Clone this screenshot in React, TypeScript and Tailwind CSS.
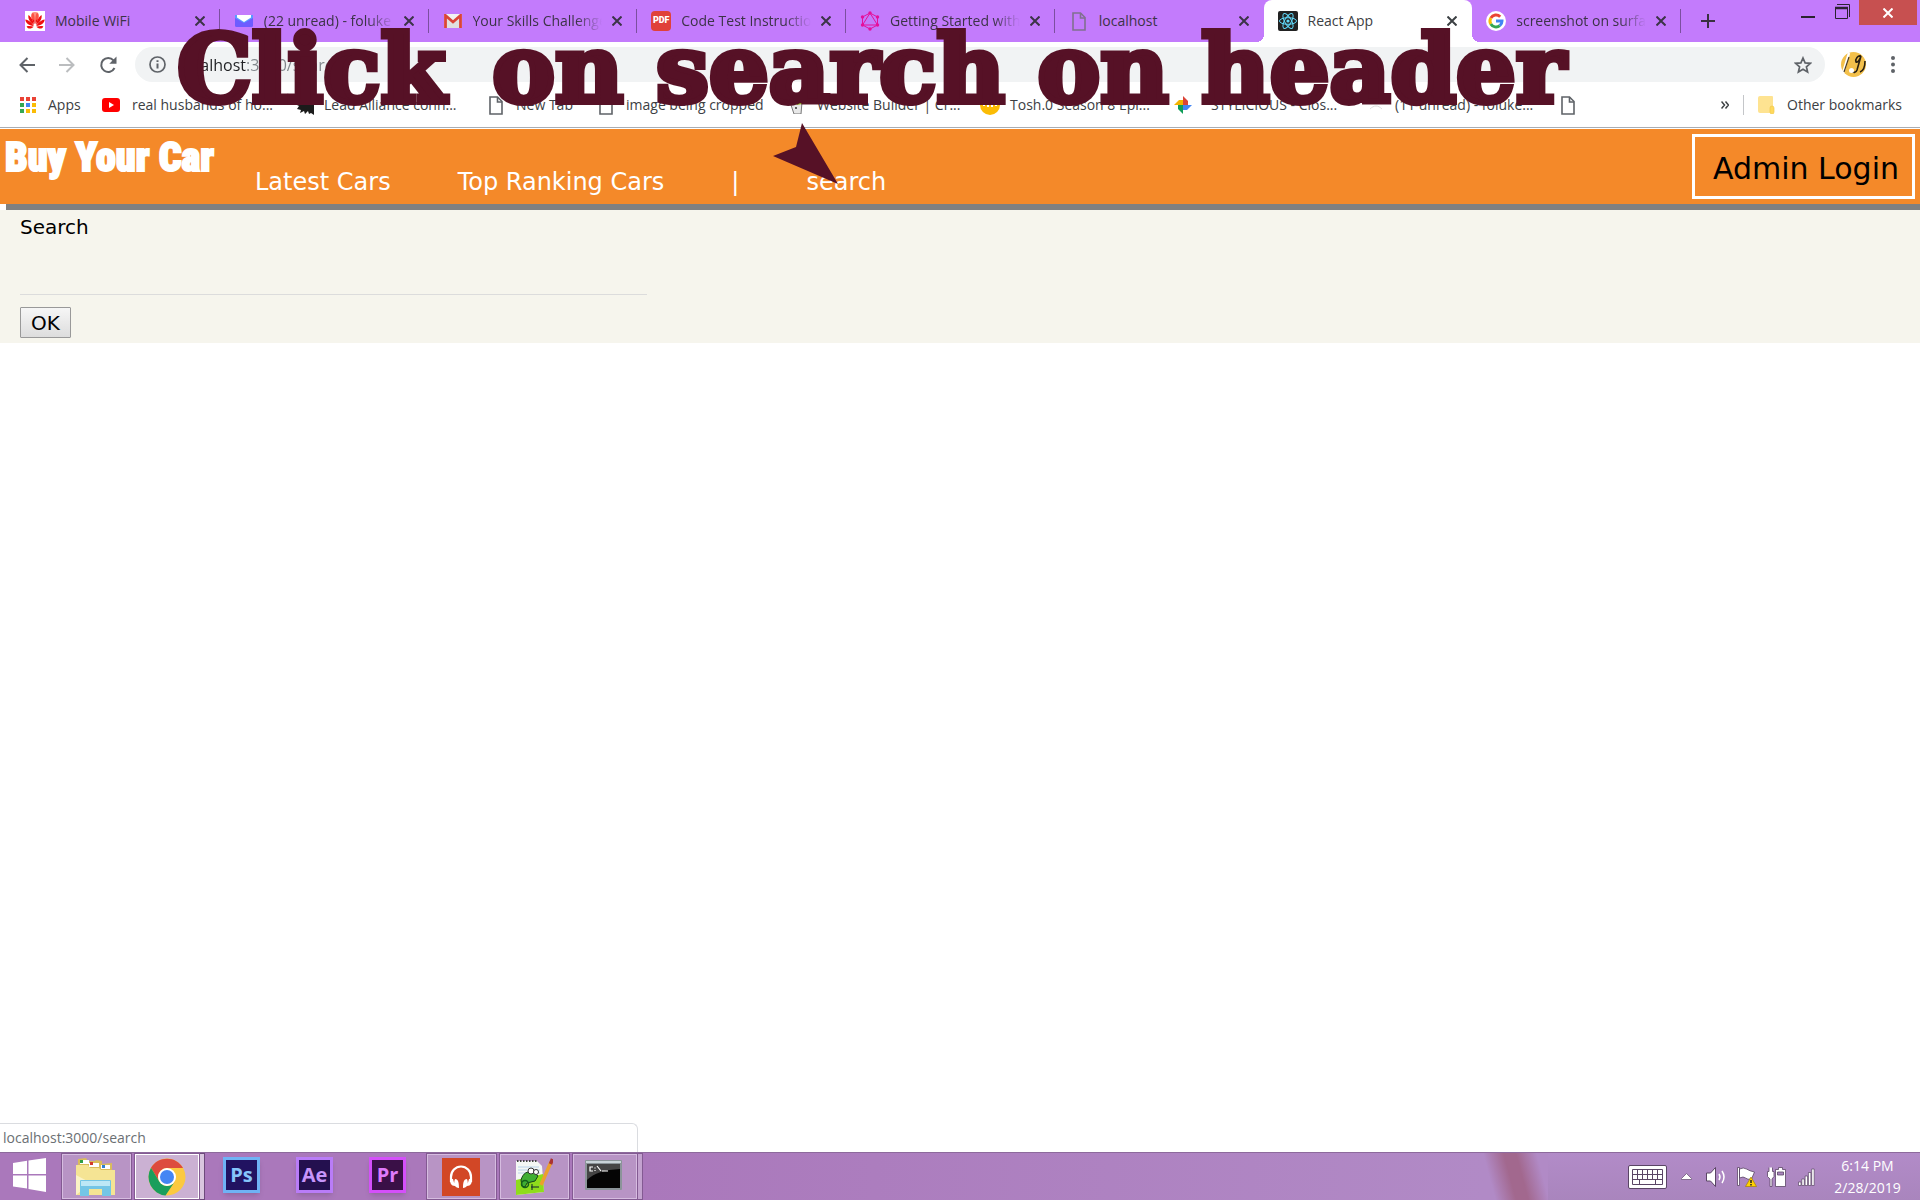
import React from "react";

const ui = "font-['Open_Sans','Noto_Sans',sans-serif]";

function PageIcon({ color = "#5f6368" }: { color?: string }) {
  return (
    <svg width="14" height="19" viewBox="0 0 14 19" fill="none" stroke={color} strokeWidth="1.6">
      <path d="M1 1h7.5L13 5.500V18H1z" />
      <path d="M8.500 1v5H13" />
    </svg>
  );
}

function Huawei() {
  return (
    <svg width="20" height="20" viewBox="0 0 20 20">
      <rect width="20" height="20" fill="#fff" />
      <g fill="#f01010">
        <path d="M9.500 13C6.500 9 5.500 4 8 1.500c1.500 2 2 7 1.500 11.500zM10.500 13C10 8.500 10.500 3.500 12 1.500 14.500 4 13.500 9 10.500 13z" />
        <path d="M9 14C5 11 2.500 7.500 3.500 4 6 5.500 8.500 10 9 14zM11 14c.5-4 3-8.500 5.500-10 1 3.500-1.500 7-5.500 10z" />
        <path d="M8.800 15C4 14.500.5 12 .3 8.500c3.500.5 7 3.500 8.500 6.500zM11.200 15c1.500-3 5-6 8.500-6.500-.2 3.500-3.700 6-8.500 6.500z" />
        <path d="M8.700 15.800C6 18.500 3 18 1.600 15.400c2-.6 5-.3 7.100.4zM11.300 15.800c2.100-.7 5.100-1 7.100-.4-1.400 2.600-4.400 3.100-7.100.4z" />
      </g>
      <circle cx="10" cy="5" r="4" fill="#ff6a55" opacity=".75" />
    </svg>
  );
}

function MailIcon() {
  return (
    <svg width="18" height="12" viewBox="0 0 18 12">
      <rect width="18" height="12" rx="1.500" fill="#6d5cff" />
      <path d="M0 0h18v3L9 8 0 3z" fill="#5a9bff" />
      <path d="M2 0h14v2.500L9 7 2 2.500z" fill="#fff" />
    </svg>
  );
}

function GmailIcon() {
  return (
    <svg width="18" height="14" viewBox="0 0 18 14">
      <rect width="18" height="14" rx="1" fill="#f1f1f1" />
      <path d="M3 14V4l6 5 6-5v10" fill="#e0e0e0" />
      <path d="M1.500 14V1.500L9 8l7.500-6.500V14" fill="none" stroke="#db4437" strokeWidth="2.800" />
    </svg>
  );
}

function GraphqlIcon() {
  return (
    <svg width="20" height="20" viewBox="0 0 20 20" fill="none" stroke="#e5109b" strokeWidth="1">
      <path d="M10 2l7.500 4v8L10 18l-7.500-4V6zM10 2L2.500 14h15z" />
      <g fill="#e5109b" stroke="none">
        <circle cx="10" cy="2" r="1.700" /><circle cx="17.500" cy="6" r="1.700" /><circle cx="17.500" cy="14" r="1.700" />
        <circle cx="10" cy="18" r="1.700" /><circle cx="2.500" cy="14" r="1.700" /><circle cx="2.500" cy="6" r="1.700" />
      </g>
    </svg>
  );
}

function ReactIcon() {
  return (
    <svg width="20" height="20" viewBox="0 0 20 20" fill="none" stroke="#61dafb" strokeWidth="1">
      <rect width="20" height="20" rx="2" fill="#222" stroke="none" />
      <ellipse cx="10" cy="10" rx="8.500" ry="3.300" />
      <ellipse cx="10" cy="10" rx="8.500" ry="3.300" transform="rotate(60 10 10)" />
      <ellipse cx="10" cy="10" rx="8.500" ry="3.300" transform="rotate(120 10 10)" />
      <circle cx="10" cy="10" r="1.600" fill="#61dafb" stroke="none" />
    </svg>
  );
}

function GoogleIcon() {
  return (
    <svg width="20" height="20" viewBox="0 0 20 20">
      <circle cx="10" cy="10" r="10" fill="#fff" />
      <g fill="none" strokeWidth="3">
        <path d="M14.200 5.800A6 6 0 0 0 4.800 7" stroke="#ea4335" />
        <path d="M4.800 7a6 6 0 0 0 0 6" stroke="#fbbc05" />
        <path d="M4.800 13a6 6 0 0 0 9 1.600" stroke="#34a853" />
        <path d="M13.800 14.600A6 6 0 0 0 16 10h-6" stroke="#4285f4" />
      </g>
    </svg>
  );
}

function PdfIcon() {
  return (
    <span className="flex h-5 w-5 items-center justify-center rounded-sm bg-[#e0413a] font-['Roboto',sans-serif] text-[9px] font-black text-white">
      PDF
    </span>
  );
}

function Cross({ className = "" }: { className?: string }) {
  return (
    <svg className={className} width="10" height="10" viewBox="0 0 10 10" stroke="currentColor" strokeWidth="2">
      <path d="M.5.5l9 9M9.500.5l-9 9" />
    </svg>
  );
}

const tabs = [
  { title: "Mobile WiFi", icon: <Huawei /> },
  { title: "(22 unread) - foluke", icon: <MailIcon /> },
  { title: "Your Skills Challenge", icon: <GmailIcon /> },
  { title: "Code Test Instructions", icon: <PdfIcon /> },
  { title: "Getting Started with", icon: <GraphqlIcon /> },
  { title: "localhost", icon: <PageIcon color="#80708f" /> },
  { title: "React App", icon: <ReactIcon />, active: true },
  { title: "screenshot on surface", icon: <GoogleIcon /> },
];

function TabStrip() {
  return (
    <div className="flex h-[42px] bg-[#c37bfc] pl-[11px] text-[#3c3347]">
      <div className="grid w-[1670px] min-w-0 grid-cols-8">
        {tabs.map((t, i) => (
          <div
            key={t.title}
            className={
              t.active
                ? "relative flex min-w-0 items-center rounded-t-lg bg-white pr-[15px] pl-[14px] text-[#3c4043]"
                : "flex min-w-0 items-center pl-[14px]"
            }
          >
            {t.active && (
              <>
                <span className="absolute bottom-0 -left-2 h-2 w-2 bg-[radial-gradient(circle_at_0_0,transparent_8px,white_8px)]" />
                <span className="absolute -right-2 bottom-0 h-2 w-2 bg-[radial-gradient(circle_at_100%_0,transparent_8px,white_8px)]" />
              </>
            )}
            <span className="flex w-5 shrink-0 justify-center">{t.icon}</span>
            <button
              className={
                t.title.length > 15
                  ? "ml-[10px] min-w-0 flex-1 overflow-hidden mask-r-from-80% text-left text-sm whitespace-nowrap"
                  : "ml-[10px] min-w-0 flex-1 overflow-hidden text-left text-sm whitespace-nowrap"
              }
            >
              {t.title}
            </button>
            <button aria-label={"Close " + t.title} className="ml-[10px] shrink-0">
              <Cross />
            </button>
            {!t.active && (
              <span className={i === 5 ? "ml-[14px] w-px" : "ml-[14px] h-6 w-px bg-[#7b4f9e]"} />
            )}
          </div>
        ))}
      </div>
      <button aria-label="New tab" className="ml-5 text-[#3a3040]">
        <svg width="14" height="14" viewBox="0 0 14 14" stroke="currentColor" strokeWidth="2"><path d="M7 0v14M0 7h14" /></svg>
      </button>
      <div className="ml-auto flex items-start text-[#2b2230]">
        <button aria-label="Minimize" className="mt-4 mr-5">
          <svg width="14" height="2" viewBox="0 0 14 2"><path d="M0 0h14v2H0z" fill="currentColor" /></svg>
        </button>
        <button aria-label="Restore" className="mt-1 mr-[9px]">
          <svg width="15" height="15" viewBox="0 0 15 15" fill="none" stroke="currentColor">
            <path d="M2 .5h12.500V13" /><path d="M.5 4v10.500h12V4" /><path d="M0 4h13" strokeWidth="2.500" />
          </svg>
        </button>
        <button aria-label="Close window" className="mr-[3px] flex h-[25px] w-[58px] items-center justify-center bg-[#c75050] text-white">
          <Cross />
        </button>
      </div>
    </div>
  );
}

function Toolbar() {
  return (
    <div className="flex h-[45px] items-center pl-[19px] text-[#5f6368]">
      <button aria-label="Back" className="mr-6">
        <svg width="16" height="16" viewBox="0 0 16 16" fill="none" stroke="currentColor" strokeWidth="2"><path d="M16 8H1.500M8.500 1L1.500 8l7 7" /></svg>
      </button>
      <button aria-label="Forward" className="mr-6 text-[#bbbdbf]">
        <svg width="16" height="16" viewBox="0 0 16 16" fill="none" stroke="currentColor" strokeWidth="2"><path d="M0 8h14.500M7.500 1l7 7-7 7" /></svg>
      </button>
      <button aria-label="Reload" className="mr-[18px]">
        <svg width="18" height="18" viewBox="0 0 18 18" fill="none" stroke="currentColor" strokeWidth="2"><path d="M15.500 12A7 7 0 1 1 14.500 4.300" /><path d="M17.500.5v7.200h-7.200z" fill="currentColor" stroke="none" /></svg>
      </button>
      <div className="flex h-[35px] flex-1 items-center rounded-full bg-[#f1f3f4] pr-[13px] pl-[14px]">
        <svg width="17" height="17" viewBox="0 0 17 17" fill="none" stroke="currentColor" strokeWidth="1.700"><circle cx="8.500" cy="8.500" r="7.500" /><path d="M8.500 7.500v5M8.500 4.300v1.800" strokeWidth="2" /></svg>
        <input
          aria-label="Address"
          defaultValue="localhost:3000/search"
          className="ml-[13px] h-6 min-w-0 flex-1 bg-[linear-gradient(90deg,#202124_68px,#80868b_68px)] bg-clip-text text-base text-transparent outline-none"
        />
        <button aria-label="Bookmark this page">
          <svg width="18" height="18" viewBox="0 0 18 18" fill="none" stroke="currentColor" strokeWidth="1.700"><path d="M9 2l2.100 4.900 5.300.4-4 3.500 1.200 5.200L9 13.200 4.400 16l1.200-5.200-4-3.500 5.300-.4z" /></svg>
        </button>
      </div>
      <button aria-label="Profile" className="ml-4">
        <svg width="25" height="25" viewBox="0 0 25 25" fill="none">
          <circle cx="12.500" cy="12.500" r="12.500" fill="#f3c04b" />
          <path d="M8 1L2 21" stroke="#fff" strokeWidth="2.500" /><path d="M8 5L3 20" stroke="#4a3a20" strokeWidth="1.200" />
          <path d="M20 4c-3-1-6 3-5 6 2 1 4-3 5-6l-4 14c-1 3-4 3-5 1M24 9c0 6-2 10-5 11" stroke="#2a2010" strokeWidth="1.600" />
          <circle cx="10.500" cy="18.500" r="2.500" fill="#fff" />
        </svg>
      </button>
      <button aria-label="Menu" className="mx-[25px]">
        <svg width="4" height="17" viewBox="0 0 4 17" fill="currentColor"><circle cx="2" cy="2" r="2" /><circle cx="2" cy="8.500" r="2" /><circle cx="2" cy="15" r="2" /></svg>
      </button>
    </div>
  );
}

function AppsIcon() {
  const c = ["#ea4335", "#ea4335", "#ea4335", "#34a853", "#4285f4", "#fbbc05", "#34a853", "#fbbc05", "#fbbc05"];
  return (
    <svg width="16" height="16" viewBox="0 0 16 16">
      {c.map((f, i) => <rect key={i} x={(i % 3) * 6} y={Math.floor(i / 3) * 6} width="4" height="4" fill={f} />)}
    </svg>
  );
}

const bookmarks = [
  { text: "Apps", w: "w-[82px]", iw: "w-4", gap: "gap-3", icon: <AppsIcon /> },
  {
    text: "real husbands of ho...", w: "w-[192px]", iw: "w-[18px]", gap: "gap-3",
    icon: <svg width="18" height="14" viewBox="0 0 18 14"><rect width="18" height="14" rx="3" fill="#f00" /><path d="M7 4l5 3-5 3z" fill="#fff" /></svg>,
  },
  {
    text: "Lead Alliance conn...", w: "w-[194px]", iw: "w-5", gap: "gap-[10px]",
    icon: <svg width="20" height="20" viewBox="0 0 20 20"><path d="M20 3v17l-3-2-2 1-1-3-3 3-1-3-4 2 1-3-4-1 2-3-4-2 5-1 1-3z" fill="#1b1b1b" /></svg>,
  },
  { text: "New Tab", w: "w-[110px]", iw: "w-4", gap: "gap-3", icon: <PageIcon /> },
  { text: "image being cropped", w: "w-[191px]", iw: "w-4", gap: "gap-3", icon: <PageIcon /> },
  {
    text: "Website Builder | Cr...", w: "w-[191px]", iw: "w-4", gap: "gap-3",
    icon: <svg width="14" height="18" viewBox="0 0 14 18"><path d="M3 6h9l-1 12H4L1 9z" fill="#e8e8e8" stroke="#777" /><path d="M1 3l5 3 6-1v3l-5 1z" fill="#8ba324" /><circle cx="6" cy="12" r="1" fill="#333" /></svg>,
  },
  {
    text: "Tosh.0 Season 8 Epi...", w: "w-[194px]", iw: "w-5", gap: "gap-[10px]",
    icon: <svg width="20" height="20" viewBox="0 0 20 20"><circle cx="10" cy="10" r="10" fill="#fbbc05" /><path d="M3 10h2M7 11h2M11 11h2M15 10h2" stroke="#fff" strokeWidth="2" /></svg>,
  },
  {
    text: "STYLICIOUS - Clos...", w: "w-[194px]", iw: "w-[18px]", gap: "gap-[19px]",
    icon: <svg width="18" height="18" viewBox="0 0 18 18"><path d="M9 9V0l5 5v4z" fill="#db4437" /><path d="M9 9h9l-5 5H9z" fill="#4285f4" /><path d="M9 9v9l-5-5V9z" fill="#0f9d58" /><path d="M9 9H0l5-5h4z" fill="#f4b400" /></svg>,
  },
  {
    text: "(11 unread) - foluke...", w: "w-[192px]", iw: "w-4", gap: "gap-[11px]",
    icon: <svg width="14" height="14" viewBox="0 0 14 14" fill="none" stroke="#ddd"><path d="M1 11c4-4 8-4 12 0" /></svg>,
  },
  { text: "", w: "w-4", iw: "w-4", gap: "gap-0", icon: <PageIcon /> },
];

function BookmarkBar() {
  return (
    <div className="flex h-[41px] items-center border-b border-[#a9adb3] bg-white pr-[18px] pb-1 pl-5 text-sm text-[#3c4043]">
      {bookmarks.map((b, i) => (
        <a key={i} href="#" aria-label={b.text || "Untitled page"} className={"flex shrink-0 items-center whitespace-nowrap " + b.w + " " + b.gap}>
          <span className={"flex shrink-0 justify-center " + b.iw}>{b.icon}</span>
          {b.text}
        </a>
      ))}
      <button aria-label="More bookmarks" className="ml-auto">
        <svg width="8" height="8" viewBox="0 0 8 8" fill="none" stroke="#3c4043" strokeWidth="1.500"><path d="M.5.5L3.500 4l-3 3.500M4.500.5L7.500 4l-3 3.500" /></svg>
      </button>
      <span className="ml-[14px] h-5 w-px bg-[#c4c6c9]" />
      <a href="#" className="ml-[14px] flex items-center gap-3">
        <svg width="17" height="18" viewBox="0 0 17 18"><path d="M2 0h12a1 1 0 0 1 1 1v16H2a2 2 0 0 1-2-2V2a2 2 0 0 1 2-2z" fill="#fee391" /><path d="M12 12a2 2 0 0 1 4 0v4a2 2 0 0 1-4 0z" fill="#ffd95c" stroke="#f0c94a" strokeWidth=".7" /></svg>
        Other bookmarks
      </a>
    </div>
  );
}

function SitePage() {
  return (
    <main className="flex-1 bg-white pt-px font-['DejaVu_Sans','Verdana',sans-serif] text-black">
      <header className="flex h-[75px] items-start bg-[#f48929] pr-[5px] pl-[5px] text-2xl text-white">
        <h1 className="mt-[6px] w-[250px] text-[40px] leading-[46px] font-black whitespace-nowrap font-['Impact','Roboto_Condensed','Open_Sans_Condensed','Noto_Sans_ExtraCondensed','Noto_Sans_Condensed','Roboto',sans-serif] [-webkit-text-stroke:2px_white]">Buy Your Car</h1>
        <nav className="mt-[37px] flex gap-[67px] leading-8 whitespace-nowrap">
          <a href="#">Latest Cars</a>
          <a href="#">Top Ranking Cars</a>
          <span>|</span>
          <a href="#">search</a>
        </nav>
        <button className="mt-[5px] ml-auto h-[65px] border-[3px] border-white pt-1 pr-[13px] pl-[18px] text-[30px] text-black">Admin Login</button>
      </header>
      <div className="ml-[6px] h-[6px] bg-[#808080]" />
      <form className="flex h-[133px] flex-col items-start bg-[#f6f5ed] px-5 pt-[3px] text-xl">
        <label htmlFor="query" className="leading-7">Search</label>
        <input id="query" className="h-[54px] w-1/3 border-b border-[#dcdcdc] bg-transparent outline-none" />
        <button type="button" className="mt-3 h-[31px] rounded-[1px] border border-[#999] bg-linear-to-b from-[#f6f6f6] to-[#dddddd] px-[10px] leading-7">OK</button>
      </form>
    </main>
  );
}

function AdobeIcon({ label, cls }: { label: string; cls: string }) {
  return (
    <button className={"flex h-9 w-[37px] items-center justify-center border-[3px] font-['Open_Sans',sans-serif] text-xl font-bold shadow-md " + cls}>
      {label}
    </button>
  );
}

const runBtn = "flex h-[47px] items-center justify-center border border-[#835a92] bg-[#b894c5] outline-1 -outline-offset-2 outline-[#d6bce0]";

function Taskbar() {
  return (
    <footer className="flex h-12 items-start border-t border-[#8d6a9c] bg-linear-to-b from-[#b28bc8] to-[#a985bd]">
      <div className="flex h-[47px] w-[643px] shrink-0 items-center bg-[#aa78bb]">
        <button aria-label="Start" className="mb-1 ml-[13px]">
          <svg width="33" height="34" viewBox="0 0 33 34" fill="#fff"><path d="M0 5l14-2.200V16H0zM15.500 2.500L33 0v16H15.500zM0 17.500h14v13L0 28.500zM15.500 17.500H33V34l-17.500-3z" /></svg>
        </button>
        <button aria-label="File Explorer" className={runBtn + " ml-[15px] w-[71px] pr-1"}>
          <svg width="40" height="40" viewBox="0 0 40 40">
            <path d="M3 2l8-1 2 3h7l1-1 6 1v3l10-1v30H2z" fill="#d9bc5c" />
            <rect x="5" y="3" width="9" height="4" fill="#fff" /><rect x="5" y="3" width="3" height="3" fill="#2f9e44" />
            <rect x="14" y="6" width="10" height="4" fill="#fff" /><rect x="15" y="5" width="3" height="3" fill="#d33a2c" />
            <rect x="26" y="8" width="9" height="4" fill="#fff" /><rect x="27" y="8" width="3" height="3" fill="#2e7fd0" />
            <path d="M1 8h12l2 3h9l2 2h14v25H1z" fill="#f5e494" /><path d="M1 18l15 8-15 12z" fill="#fbf3c5" />
            <path d="M5 24q0-1 1-1h29q1 0 1 1v15h-9v-7H14v7H5z" fill="#74c5e6" /><path d="M6 24h29v5H6z" fill="#bde7f6" />
          </svg>
        </button>
        <button aria-label="Chrome" className={runBtn + " ml-[2px] w-[66px] border-[#6d4a7c] bg-[#cbb1d3] outline-white"}>
          <svg width="38" height="38" viewBox="0 0 38 38">
            <circle cx="19" cy="19" r="18.500" fill="#fbc940" />
            <path d="M3 9.700A18.500 18.500 0 0 1 35 10H19a9 9 0 0 0-8 13z" fill="#dd4b3e" />
            <path d="M3 9.700A18.500 18.500 0 0 0 17.500 37.400L26.500 24A9 9 0 0 1 11 23z" fill="#1a9e5c" />
            <circle cx="19" cy="19" r="9" fill="#fff" /><circle cx="19" cy="19" r="7" fill="#4486f4" />
          </svg>
        </button>
        <span className="h-[47px] w-[5px] border border-l-0 border-[#6d4a7c] bg-[#d9c6df]" />
        <div className="mb-1 ml-[18px] flex gap-9">
          <AdobeIcon label="Ps" cls="border-[#6fb2f5] bg-[#211261] text-[#86c5fb]" />
          <AdobeIcon label="Ae" cls="border-[#b97cf8] bg-[#24104f] text-[#c795fa]" />
          <AdobeIcon label="Pr" cls="border-[#d44ffa] bg-[#3a1047] text-[#df7bfb]" />
        </div>
        <button aria-label="Music" className={runBtn + " ml-5 w-[71px] pr-[2px]"}>
          <svg width="38" height="38" viewBox="0 0 38 38"><rect width="38" height="38" fill="#d24726" /><path d="M9 24V19a10 10.500 0 0 1 20 0v5" fill="none" stroke="#fff" strokeWidth="2.200" /><path d="M13 21c3 0 4 3 4 9-4 0-6-4-4-9zM25 21c-3 0-4 3-4 9 4 0 6-4 4-9zM8 21h3l2 7c-4 0-5-3-5-7zM30 21h-3l-2 7c4 0 5-3 5-7z" fill="#fff" /></svg>
        </button>
        <button aria-label="Notepad++" className={runBtn + " ml-[2px] w-[71px] pr-[2px]"}>
          <svg width="38" height="38" viewBox="0 0 38 38">
            <path d="M1 3h21l5 5 2 26-28 3z" fill="#f4f7f4" /><path d="M1 22l27-6 1 18-28 3z" fill="#8fdc1c" />
            <path d="M2 3h20" stroke="#444" strokeWidth="2" strokeDasharray="1.500 1.500" /><path d="M3 9h21M3 12h22M3 15h22" stroke="#a9c9e8" strokeWidth=".8" />
            <path d="M6 22c2-7 6-9 12-8l5 4-3 5-8 2-2 4-3-1z" fill="#3fae33" stroke="#14421a" />
            <circle cx="16" cy="13" r="3" fill="#fff" stroke="#333" /><circle cx="21" cy="14" r="2.500" fill="#fff" stroke="#333" />
            <circle cx="10" cy="26" r="3.500" fill="none" stroke="#14601a" strokeWidth="1.500" /><path d="M16 29h8M17 26v6" stroke="#123" />
            <path d="M26 27L36 4" stroke="#eba02d" strokeWidth="3.500" /><path d="M35.500 6L37.500 1" stroke="#a33" strokeWidth="3.500" />
          </svg>
        </button>
        <button aria-label="Command Prompt" className={runBtn + " ml-[2px] w-[66px] pr-1 pb-1"}>
          <svg width="37" height="30" viewBox="0 0 37 30"><rect width="37" height="30" rx="1" fill="#8b9499" /><rect x="1" y="1" width="35" height="2" fill="#c9d3d8" /><rect x="2" y="4" width="33" height="24" fill="#050505" /><path d="M2 4h33v5Q12 10 2 20z" fill="#454545" />
            <path d="M8 7H5v4h3M10 7.500v1M10 10v1M12 6l4 5M17 11h6" stroke="#fff" strokeWidth="1.200" fill="none" /></svg>
        </button>
        <span className="h-[47px] w-[5px] border border-l-0 border-[#835a92] bg-[#c3a2cf]" />
      </div>
      <div className="h-[47px] flex-1 bg-linear-to-r from-[#aa78bb] to-[#b18ac6]" />
      <div className="h-[47px] w-16 bg-[linear-gradient(75deg,#b18ac6_15%,#a2688e_42%,#a2688e_58%,#b18ac6_85%)]" />
      <div className="flex h-[47px] w-[372px] items-center justify-end">
        <svg width="39" height="24" viewBox="0 0 39 24" fill="none" stroke="#5a4565"><rect x=".5" y=".5" width="38" height="23" rx="1.500" fill="#fff" /><path d="M4.500 4.500h30v15h-30zM4.500 9.500h30M4.500 14.500h30M9.500 4.500v10M14.500 4.500v10M19.500 4.500v10M24.500 4.500v10M29.500 4.500v10M11.500 14.500v5M27.500 14.500v5" /></svg>
        <svg className="ml-[14px]" width="11" height="7" viewBox="0 0 11 7"><path d="M5.500.5l5 5v1H.5v-1z" fill="#fff" stroke="#6d5878" strokeWidth=".8" /></svg>
        <svg className="ml-[14px]" width="21" height="20" viewBox="0 0 21 20" fill="#fff" stroke="#5a4565"><path d="M.5 6h4l5-5.500v19L4.500 14h-4z" /><path d="M13 7q2 3 0 6M16 4q4 6 0 12" fill="none" stroke="#fff" strokeWidth="1.500" /></svg>
        <svg className="ml-[10px]" width="20" height="20" viewBox="0 0 20 20"><path d="M.5.5h2v18h-2zM2.500 2q4-2 7 0t8 3l-3 7q-4 1-6-1t-6 0z" fill="#fff" stroke="#5a4565" strokeWidth=".8" /><path d="M14 10l5.500 9.500h-11z" fill="#ffd200" stroke="#a58100" strokeWidth=".7" /><path d="M14 13v3M14 17v1.500" stroke="#222" strokeWidth="1.500" /></svg>
        <svg className="ml-[10px]" width="20" height="20" viewBox="0 0 20 20" fill="#fff" stroke="#5a4565" strokeWidth=".8"><path d="M2 .5v4H.5v5L3 12v7.500h2V12l2-2.500v-5H5.500v-4" /><path d="M8.500 2.500h3v-2h4v2h3v17h-10z" /><path d="M10.500 5h6v3h-6z" fill="#a985bd" /></svg>
        <svg className="ml-[11px]" width="17" height="18" viewBox="0 0 17 18" fill="#fff" stroke="#5a4565" strokeWidth=".7"><path d="M.5 14h2.500v3.500H.5zM3.800 11h2.500v6.500H3.800zM7.100 8h2.500v9.500H7.100zM10.400 4.500h2.500v13h-2.500zM13.700 1h2.500v16.500h-2.500z" /></svg>
        <div className="w-[105px] text-center text-sm leading-[22px] text-white"><div>6:14 PM</div><div>2/28/2019</div></div>
      </div>
    </footer>
  );
}

export default function App() {
  return (
    <div className={"relative flex min-h-screen flex-col overflow-hidden bg-white " + ui}>
      <TabStrip />
      <Toolbar />
      <BookmarkBar />
      <SitePage />
      <div className="h-[29px] w-[638px] rounded-tr-md border-t border-r border-[#dadce0] pl-[3px] text-sm leading-7 text-[#6b6f73]">localhost:3000/search</div>
      <Taskbar />
      <p className="pointer-events-none absolute top-[22px] left-[177px] font-['Cooper_Black','DejaVu_Serif',serif] text-[94px] leading-none font-bold whitespace-nowrap text-[#561126] [-webkit-text-stroke:6px_#561126]">
        <span className="mr-[14px]">Click</span> on search on header
      </p>
      <svg className="pointer-events-none absolute top-[123px] left-[773px]" width="65" height="61" viewBox="0 0 65 61" fill="#561126"><path d="M29 0l36 61L0 33l23-9z" /></svg>
    </div>
  );
}
